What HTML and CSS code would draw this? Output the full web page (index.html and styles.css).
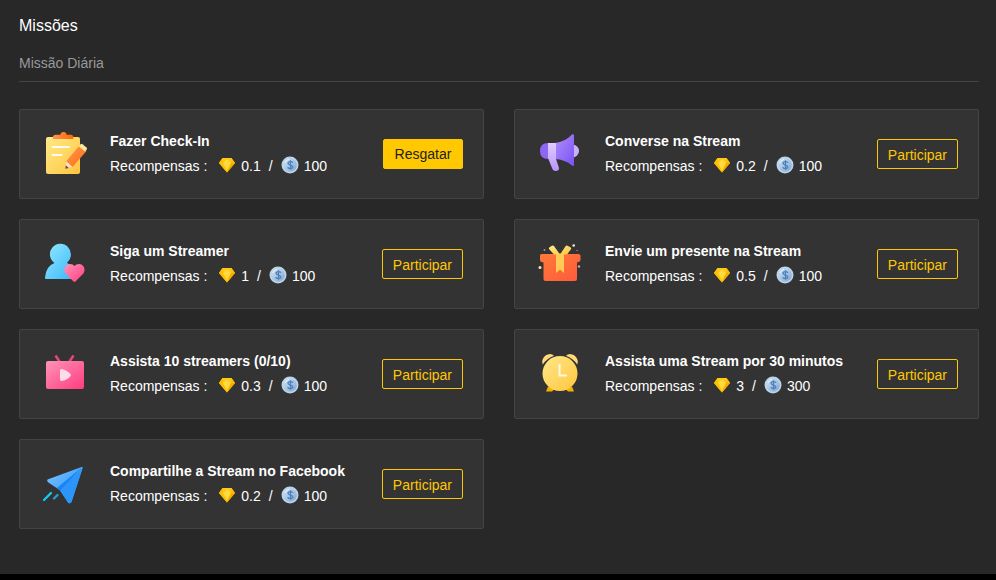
FILE: index.html
```html
<!DOCTYPE html>
<html lang="pt-BR">
<head>
    <meta charset="UTF-8">
    <meta name="viewport" content="width=device-width, initial-scale=1.0">
    <title>Missões</title>
    <link rel="stylesheet" href="styles.css">
</head>
<body>
    <!-- Shared gradients and reward icons -->
    <svg class="defs" width="0" height="0" aria-hidden="true">
        <defs>
            <linearGradient id="yellow" x1="0" y1="0" x2="1" y2="1">
                <stop offset="0" stop-color="#ffe98a"/><stop offset="1" stop-color="#ffc53d"/>
            </linearGradient>
            <linearGradient id="orange" x1="0" y1="0" x2="1" y2="1">
                <stop offset="0" stop-color="#ff9a52"/><stop offset="1" stop-color="#ff6a10"/>
            </linearGradient>
            <linearGradient id="clip" x1="0" y1="0" x2="1" y2="0">
                <stop offset="0" stop-color="#ff9252"/><stop offset="1" stop-color="#ff6a00"/>
            </linearGradient>
            <linearGradient id="purple" x1="0" y1="0" x2="1" y2="1">
                <stop offset="0" stop-color="#b190ff"/><stop offset="1" stop-color="#7a52f0"/>
            </linearGradient>
            <linearGradient id="lilac" x1="0" y1="0" x2="0" y2="1">
                <stop offset="0" stop-color="#e2ccff"/><stop offset="1" stop-color="#b795fa"/>
            </linearGradient>
            <linearGradient id="cyan" x1="0" y1="0" x2="1" y2="1">
                <stop offset="0" stop-color="#93e9ff"/><stop offset="1" stop-color="#3cb8fa"/>
            </linearGradient>
            <linearGradient id="pink" x1="0" y1="0" x2="1" y2="1">
                <stop offset="0" stop-color="#ff94b8"/><stop offset="1" stop-color="#ff3c80"/>
            </linearGradient>
            <linearGradient id="gift" x1="0" y1="0" x2="1" y2="1">
                <stop offset="0" stop-color="#ff7a38"/><stop offset="1" stop-color="#ff5a3c"/>
            </linearGradient>
            <linearGradient id="blue" x1="0" y1="0" x2="1" y2="1">
                <stop offset="0" stop-color="#7cc4ff"/><stop offset="1" stop-color="#1f8df8"/>
            </linearGradient>
            <linearGradient id="silver" x1="0" y1="0" x2="1" y2="1">
                <stop offset="0" stop-color="#d3e6f6"/><stop offset="1" stop-color="#7ba6d4"/>
            </linearGradient>
        </defs>
        <symbol id="gem" viewBox="0 0 18 18">
            <path d="M4.500 2h9L17 7l-8 9.500L1 7z" fill="#ffc60a"/>
            <path d="M4.500 2L1 7h4z" fill="#ffbe00"/>
            <path d="M13.500 2L17 7h-4z" fill="#ffbc00"/>
            <path d="M4.500 2h9L13 7H5z" fill="#ffc91a"/>
            <path d="M1 7h4l4 9.500z" fill="#ffbe00"/>
            <path d="M17 7h-4l-4 9.500z" fill="#f8aa00"/>
            <path d="M5 7l4-3.500L13 7l-4 7z" fill="#ffdb40"/>
        </symbol>
        <symbol id="coin" viewBox="0 0 18 18">
            <circle cx="9" cy="9" r="8.500" fill="#bdd4e8"/>
            <circle cx="9" cy="9" r="6.800" fill="url(#silver)"/>
            <path d="M12 6.800C11.500 5.200 7 5 7 7.300c0 2.100 4.800 1.400 4.800 3.600 0 2.300-4.600 2-5 .2M9.500 4.300v9.400" fill="none" stroke="#4f7fb8" stroke-width="1.300"/>
            <path d="M4 7Q5 4 8 3.300" fill="none" stroke="#e8f3fb" stroke-width="1"/>
        </symbol>
    </svg>

    <main class="missions">
        <h1>Missões</h1>
        <h2>Missão Diária</h2>

        <div class="mission-list">
            <div class="mission">
                <svg class="mission-icon" viewBox="0 0 60 60" aria-hidden="true">
                    <rect x="10" y="13" width="34" height="37" rx="2" fill="url(#yellow)"/>
                    <path d="M17 15v-1.500Q17 10.800 19.500 10.800H24.500Q24.500 8 27.500 8T30.500 10.800H35q2.300 0 2.300 2.700V15z" fill="url(#clip)"/>
                    <path d="M16.500 23H33M16.500 31h9" stroke="#fffbea" stroke-width="2" stroke-linecap="round"/>
                    <path d="M30 37.500L43.500 21.500l7 5.500L37 42.500l-6 2z" fill="url(#orange)"/>
                    <path d="M42.800 22.400l1.900-2.200q.8-.7 1.800 0l4 3.400q1 .9.200 1.900l-1.700 2z" fill="#ffe79c"/>
                    <path d="M30.300 37.200L29.300 44.800l7.200-1.800z" fill="#ffe2c2"/>
                    <path d="M29.800 41.200l-.5 3.600 3.500-.9z" fill="#6b4938"/>
                </svg>
                <div class="mission-info">
                    <h3>Fazer Check-In</h3>
                    <p>Recompensas : <svg class="gem"><use href="#gem"/></svg>0.1<span class="slash">/</span><svg class="coin"><use href="#coin"/></svg>100</p>
                </div>
                <button type="button" class="btn btn-claim">Resgatar</button>
            </div>

            <div class="mission">
                <svg class="mission-icon" viewBox="1 0 60 60" aria-hidden="true">
                    <circle cx="42.500" cy="27" r="6.500" fill="#c9b0fa"/>
                    <path d="M18 19Q10 19 10 27t8 8h1V19z" fill="#8d66f2"/>
                    <path d="M25 19q10-1 17-8.500 2-.8 2 1V41q0 1.500-2 .5-7-6-17-6.500z" fill="url(#purple)"/>
                    <path d="M18 19h8v16l3 9q.3 3-3.500 3-2.500 0-3.500-3l-4-10z" fill="url(#lilac)"/>
                </svg>
                <div class="mission-info">
                    <h3>Converse na Stream</h3>
                    <p>Recompensas : <svg class="gem"><use href="#gem"/></svg>0.2<span class="slash">/</span><svg class="coin"><use href="#coin"/></svg>100</p>
                </div>
                <button type="button" class="btn">Participar</button>
            </div>

            <div class="mission">
                <svg class="mission-icon" viewBox="0 0 60 60" aria-hidden="true">
                    <path d="M18.500 29A10.500 10.500 0 1 1 31 28.500Q37 33 37 45H10q-1 0-1-1.500Q10 32 18.500 29z" fill="url(#cyan)"/>
                    <path d="M37.500 47.500L29.600 39.500C26.500 35 30 30 34 30q3 0 4.500 2Q40 30 43 30c4 0 7.500 5 4.400 9.500L39.500 47.500q-1 .8-2 0z" fill="url(#pink)"/>
                </svg>
                <div class="mission-info">
                    <h3>Siga um Streamer</h3>
                    <p>Recompensas : <svg class="gem"><use href="#gem"/></svg>1<span class="slash">/</span><svg class="coin"><use href="#coin"/></svg>100</p>
                </div>
                <button type="button" class="btn">Participar</button>
            </div>

            <div class="mission">
                <svg class="mission-icon" viewBox="1 0 60 60" aria-hidden="true">
                    <path d="M11.500 20h37q2 0 2 2v4q0 1.500-2 2l-1.500.5V45q0 2-2 2H15.500q-2 0-2-2V28.500l-2-.5q-1.500-.5-1.500-2v-4q0-2 1.500-2z" fill="url(#gift)"/>
                    <path d="M26 19.500h8V39l-4-3.500-4 3.500z" fill="#ffcb55"/>
                    <path d="M30 20.500L24 12q-1-1-2.200-.3l-2.600 1.800q-.8.800 0 1.800L24 20.500zM30 20.500L35.500 12.200q.8-1.200 2-.5l3 1.600q1.200.8.500 2L37 20.500z" fill="url(#yellow)"/>
                    <circle cx="10" cy="33.500" r="1.500" fill="#ffe0ad"/>
                    <circle cx="14.500" cy="16" r="1" fill="#cd8069"/>
                    <circle cx="43.700" cy="11.500" r="1.300" fill="#ffe6cf"/>
                    <circle cx="49" cy="32.500" r="1.200" fill="#eaa08d"/>
                    <path d="M46 16.500h2" stroke="#99654d"/>
                </svg>
                <div class="mission-info">
                    <h3>Envie um presente na Stream</h3>
                    <p>Recompensas : <svg class="gem"><use href="#gem"/></svg>0.5<span class="slash">/</span><svg class="coin"><use href="#coin"/></svg>100</p>
                </div>
                <button type="button" class="btn">Participar</button>
            </div>

            <div class="mission">
                <svg class="mission-icon" viewBox="0 0 60 60" aria-hidden="true">
                    <path d="M19.500 11.500l4 6M37.500 11.500l-4 6" stroke="#e5487c" stroke-width="2.500"/>
                    <rect x="10" y="17" width="38" height="28" rx="2" fill="url(#pink)"/>
                    <path d="M24 27q0-2.500 2-2 6 2 8.500 5 .8 1 0 2Q32 35.500 26 37q-2 .5-2-2z" fill="#ffdce9"/>
                </svg>
                <div class="mission-info">
                    <h3>Assista 10 streamers (0/10)</h3>
                    <p>Recompensas : <svg class="gem"><use href="#gem"/></svg>0.3<span class="slash">/</span><svg class="coin"><use href="#coin"/></svg>100</p>
                </div>
                <button type="button" class="btn">Participar</button>
            </div>

            <div class="mission">
                <svg class="mission-icon" viewBox="1 0 60 60" aria-hidden="true">
                    <path d="M18 42.500l-2 5h6l3-3zM42 42.500l2 5h-6l-3-3z" fill="#f5b000"/>
                    <path d="M12.800 20.500q-1.500-3.500.7-6.800t6.500-3.700q2.500 0 4 1.800-7 2.500-11.200 8.700zM47.200 20.500q1.500-3.500-.7-6.800t-6.500-3.700q-2.500 0-4 1.800 7 2.500 11.200 8.700z" fill="#ffd978"/>
                    <circle cx="30" cy="29.500" r="17.500" fill="url(#yellow)"/>
                    <path d="M29.500 20v11.500H37" fill="none" stroke="#fff8e0" stroke-width="2"/>
                </svg>
                <div class="mission-info">
                    <h3>Assista uma Stream por 30 minutos</h3>
                    <p>Recompensas : <svg class="gem"><use href="#gem"/></svg>3<span class="slash">/</span><svg class="coin"><use href="#coin"/></svg>300</p>
                </div>
                <button type="button" class="btn">Participar</button>
            </div>

            <div class="mission">
                <svg class="mission-icon" viewBox="0 0 60 60" aria-hidden="true">
                    <path d="M11.500 25.500L45.500 13q1.500-.3 1.200 1L35.500 48q-1.500 2.500-3.500.5l-8-12.200-12-8q-1.500-1.500-.5-2.800z" fill="url(#blue)"/>
                    <path d="M45.500 13.500L21 34l3.500 3z" fill="#1585f3"/>
                    <path d="M46.500 13.500L24 36.500l8 12q2 1.500 3.500-.5z" fill="#2b95fa"/>
                    <path d="M15 39l-7 7" stroke="#10cdf0" stroke-width="2.300" stroke-linecap="round"/>
                    <path d="M21.500 41l-3.500 3.500" stroke="#249dd8" stroke-width="2.300" stroke-linecap="round"/>
                </svg>
                <div class="mission-info">
                    <h3>Compartilhe a Stream no Facebook</h3>
                    <p>Recompensas : <svg class="gem"><use href="#gem"/></svg>0.2<span class="slash">/</span><svg class="coin"><use href="#coin"/></svg>100</p>
                </div>
                <button type="button" class="btn">Participar</button>
            </div>
        </div>
    </main>
</body>
</html>
```

FILE: styles.css
```css
* {
    box-sizing: border-box;
}

body {
    margin: 0;
    background-color: #000;
    color: #fff;
    font-family: Arial, "Liberation Sans", sans-serif;
    font-size: 14px;
}

.defs {
    display: block;
}

.missions {
    background-color: #282828;
    padding: 16px 17px 45px 19px;
}

h1,
h2,
h3,
p {
    margin: 0;
}

h1 {
    font-size: 16px;
    font-weight: normal;
    line-height: 20px;
}

h2 {
    margin-top: 17px;
    padding-bottom: 8px;
    border-bottom: 1px solid #444;
    color: #999;
    font-size: 14px;
    font-weight: normal;
    line-height: 20px;
}

.mission-list {
    display: grid;
    grid-template-columns: 1fr 1fr;
    gap: 20px 30px;
    margin-top: 27px;
}

.mission {
    display: flex;
    align-items: center;
    height: 90px;
    padding: 0 20px 0 16px;
    background-color: #333;
    border: 1px solid #444;
    border-radius: 2px;
}

.mission-icon {
    flex: none;
    width: 60px;
    height: 60px;
    margin-right: 14px;
}

.mission-info {
    flex: 1;
    line-height: 25px;
}

.mission-info h3 {
    font-size: 14px;
    line-height: 25px;
}

.mission-info p {
    display: flex;
    align-items: center;
}

.gem,
.coin {
    width: 18px;
    height: 18px;
    margin-right: 5px;
    margin-bottom: 3px;
}

.gem {
    margin-left: 11px;
}

.slash {
    margin: 0 8px;
}

.btn {
    min-width: 80px;
    height: 30px;
    padding: 2px 10px 0;
    background-color: transparent;
    border: 1px solid #ffc800;
    border-radius: 2px;
    color: #ffc800;
    font-family: inherit;
    font-size: 14px;
    cursor: pointer;
}

.btn-claim {
    padding-top: 0;
    background-color: #ffc800;
    color: #222;
}
```
